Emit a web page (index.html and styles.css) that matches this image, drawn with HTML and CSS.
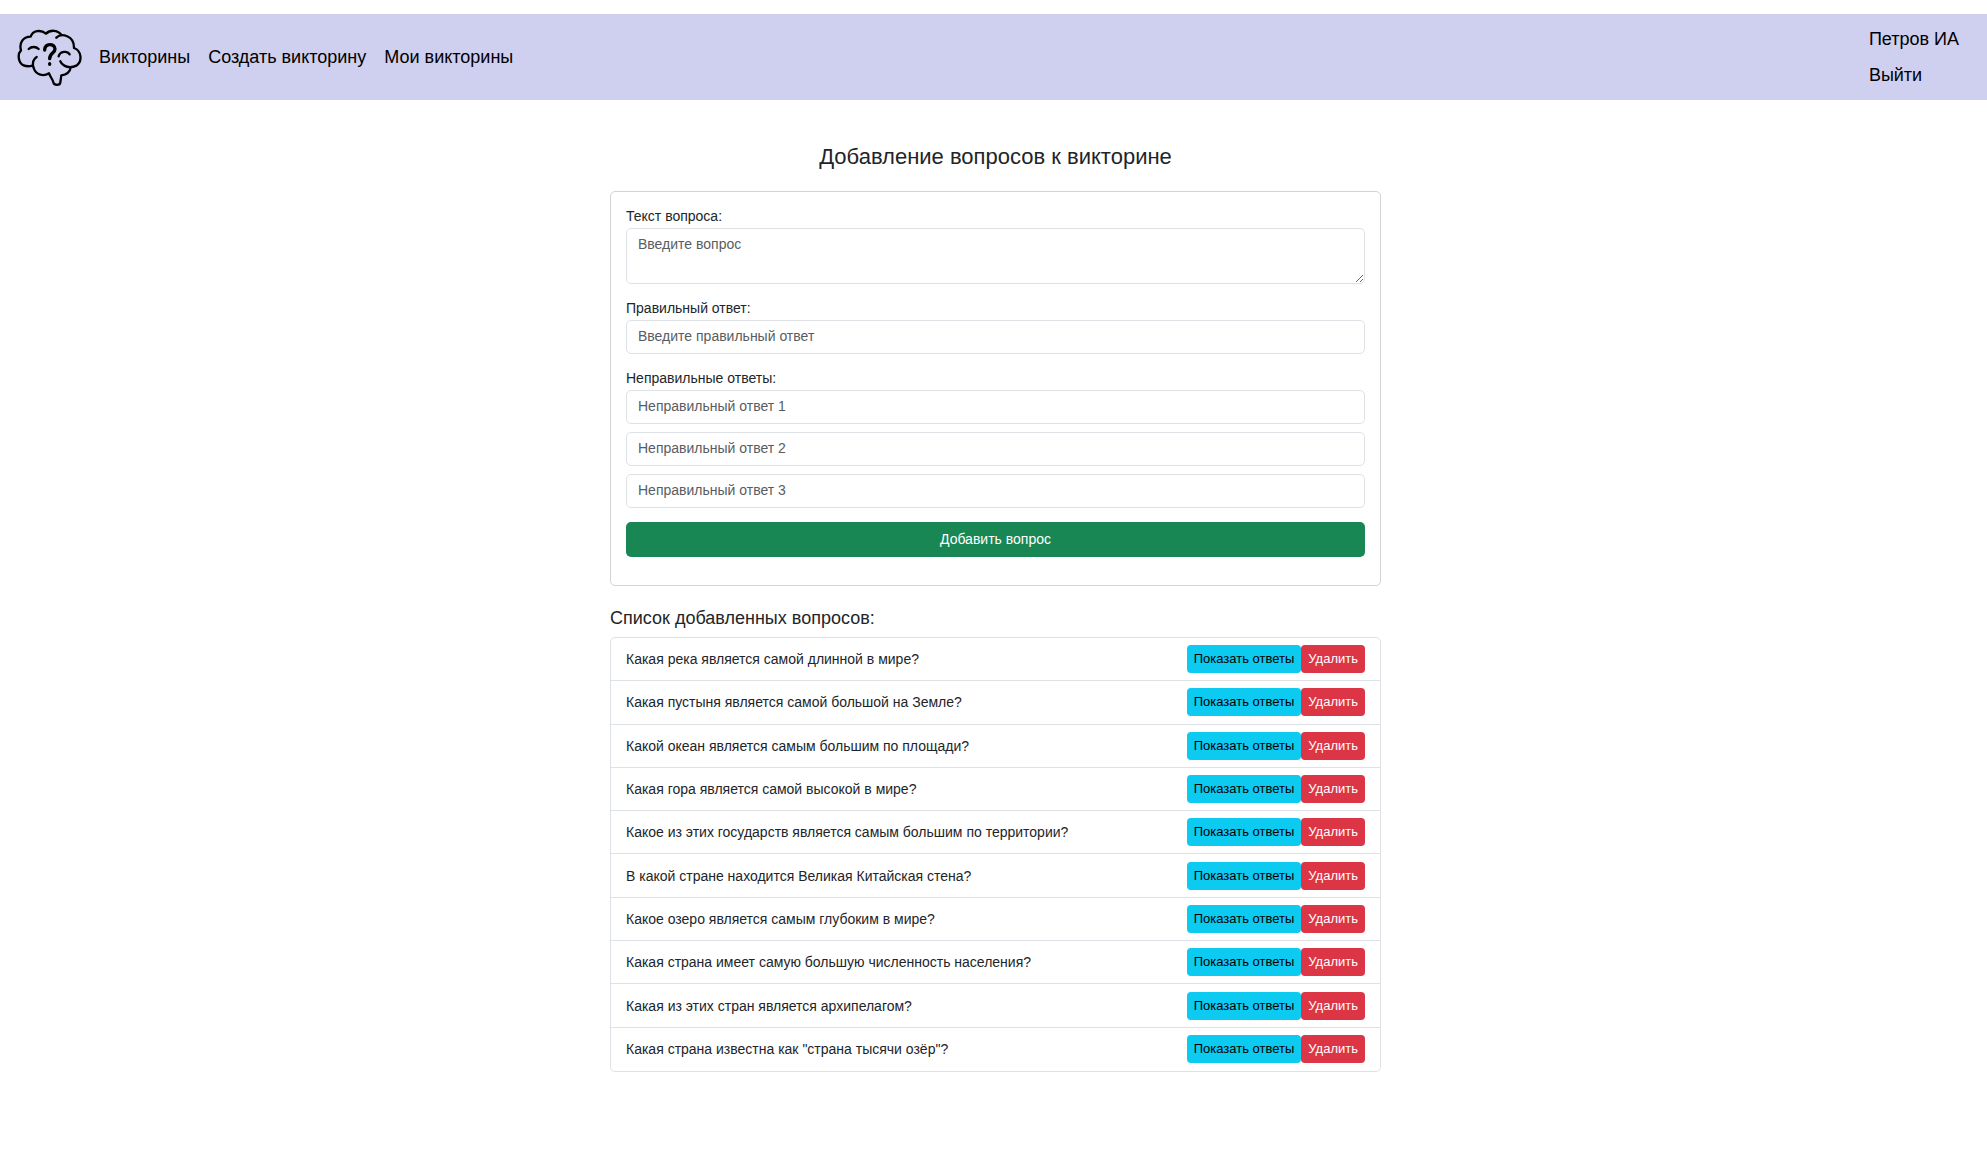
FILE: index.html
```html
<!DOCTYPE html>
<html lang="ru">
<head>
<meta charset="utf-8">
<meta name="viewport" content="width=device-width, initial-scale=1">
<title>Добавление вопросов к викторине</title>
<link rel="stylesheet" href="styles.css">
</head>
<body>
<header class="navbar">
  <a class="brand" href="#" aria-label="Главная">
    <svg class="logo" viewBox="51 84 195 177" aria-hidden="true">
      <path d="M169 113C184 98 223 106 222 144C246 152 247 186 229 197C211 206 189 201 181 184"/>
      <path d="M184 104C172 89 150 89 138 101C122 88 98 91 92 110C68 110 57 130 63 151C52 162 54 189 71 196C80 200 90 199 98 197"/>
      <path d="M110 171C98 179 96 190 101 204C108 226 131 230 147 220C151 231 158 238 160 247C163 257 180 257 181 247L184 226C200 224 210 216 212 203"/>
      <path d="M86 147C94 139 108 139 116 147M176 169C180 153 202 152 209 163"/>
      <path class="logo-mark" d="M134 150C133 129 165 129 165 147C165 160 149 159 149 176M149 191V193"/>
    </svg>
  </a>
  <nav class="menu">
    <a href="#">Викторины</a>
    <a href="#">Создать викторину</a>
    <a href="#">Мои викторины</a>
  </nav>
  <div class="account">
    <a href="#">Петров ИА</a>
    <a href="#">Выйти</a>
  </div>
</header>
<main class="page">
  <div class="content">
    <h1 class="title">Добавление вопросов к викторине</h1>
    <form class="card">
      <div class="field">
        <label for="question">Текст вопроса:</label>
        <textarea class="control" id="question" rows="2" placeholder="Введите вопрос"></textarea>
      </div>
      <div class="field">
        <label for="correct">Правильный ответ:</label>
        <input class="control" id="correct" type="text" placeholder="Введите правильный ответ">
      </div>
      <div class="field">
        <label for="wrong1">Неправильные ответы:</label>
        <div class="answers">
          <input class="control" id="wrong1" type="text" placeholder="Неправильный ответ 1">
          <input class="control" type="text" aria-label="Неправильный ответ 2" placeholder="Неправильный ответ 2">
          <input class="control" type="text" aria-label="Неправильный ответ 3" placeholder="Неправильный ответ 3">
        </div>
      </div>
      <button class="submit" type="submit">Добавить вопрос</button>
    </form>
    <h2 class="subtitle">Список добавленных вопросов:</h2>
    <ul class="questions">
      <li><span>Какая река является самой длинной в мире?</span><div class="actions"><button class="show" type="button">Показать ответы</button><button class="delete" type="button">Удалить</button></div></li>
      <li><span>Какая пустыня является самой большой на Земле?</span><div class="actions"><button class="show" type="button">Показать ответы</button><button class="delete" type="button">Удалить</button></div></li>
      <li><span>Какой океан является самым большим по площади?</span><div class="actions"><button class="show" type="button">Показать ответы</button><button class="delete" type="button">Удалить</button></div></li>
      <li><span>Какая гора является самой высокой в мире?</span><div class="actions"><button class="show" type="button">Показать ответы</button><button class="delete" type="button">Удалить</button></div></li>
      <li><span>Какое из этих государств является самым большим по территории?</span><div class="actions"><button class="show" type="button">Показать ответы</button><button class="delete" type="button">Удалить</button></div></li>
      <li><span>В какой стране находится Великая Китайская стена?</span><div class="actions"><button class="show" type="button">Показать ответы</button><button class="delete" type="button">Удалить</button></div></li>
      <li><span>Какое озеро является самым глубоким в мире?</span><div class="actions"><button class="show" type="button">Показать ответы</button><button class="delete" type="button">Удалить</button></div></li>
      <li><span>Какая страна имеет самую большую численность населения?</span><div class="actions"><button class="show" type="button">Показать ответы</button><button class="delete" type="button">Удалить</button></div></li>
      <li><span>Какая из этих стран является архипелагом?</span><div class="actions"><button class="show" type="button">Показать ответы</button><button class="delete" type="button">Удалить</button></div></li>
      <li><span>Какая страна известна как "страна тысячи озёр"?</span><div class="actions"><button class="show" type="button">Показать ответы</button><button class="delete" type="button">Удалить</button></div></li>
    </ul>
  </div>
</main>
</body>
</html>
```
FILE: styles.css
```css
*, *::before, *::after {
  box-sizing: border-box;
}

body {
  margin: 0;
  padding-top: 14px;
  background: #fff;
  color: #212529;
  font: 14px/22px Arial, "Liberation Sans", sans-serif;
}

button, input, textarea {
  font: inherit;
}

a {
  color: #000;
  text-decoration: none;
}

.navbar {
  display: flex;
  align-items: center;
  padding: 7px 28px 7px 17px;
  background: #cfcfef;
  font-size: 18px;
}

.brand {
  display: flex;
  margin-right: 17px;
}

.logo {
  width: 65px;
  height: 59px;
  fill: none;
  stroke: #000;
  stroke-width: 7;
  stroke-linecap: round;
  stroke-linejoin: round;
}

.logo-mark {
  stroke-width: 10;
}

.menu {
  display: flex;
  gap: 18px;
}

.account {
  display: flex;
  flex-direction: column;
  margin-left: auto;
  line-height: 36px;
}

.page {
  padding: 43px 0 42px 4px;
}

.content {
  max-width: 771px;
  margin: 0 auto;
}

.title {
  margin: 0 0 20px;
  font-size: 22px;
  font-weight: 400;
  line-height: 28px;
  text-align: center;
}

.card {
  padding: 14px 15px 28px;
  border: 1px solid #d3d3d3;
  border-radius: 5px;
}

.field {
  margin-bottom: 14px;
}

.field label {
  display: block;
  padding-bottom: 2px;
  line-height: 20px;
}

.control {
  display: block;
  width: 100%;
  height: 34px;
  padding: 5px 11px 7px;
  border: 1px solid #dee2e6;
  border-radius: 5px;
  background: #fff;
  color: #212529;
  line-height: 20px;
}

textarea.control {
  height: 56px;
  resize: vertical;
}

.control::placeholder {
  color: #595c5f;
  opacity: 1;
}

.answers {
  display: grid;
  gap: 8px;
}

.submit {
  display: block;
  width: 100%;
  height: 35px;
  padding: 0 11px 2px;
  border: 0;
  border-radius: 5px;
  background: #198754;
  color: #fff;
}

.subtitle {
  margin: 21px 0 8px;
  font-size: 18px;
  font-weight: 400;
  line-height: 22px;
}

.questions {
  display: grid;
  grid-auto-rows: 1fr;
  min-height: 435px;
  margin: 0;
  padding: 0;
  border: 1px solid #dee2e6;
  border-radius: 5px;
  list-style: none;
}

.questions li {
  display: flex;
  align-items: center;
  justify-content: space-between;
  padding: 0 15px;
}

.questions li:not(:last-child) {
  border-bottom: 1px solid #dee2e6;
}

.actions {
  display: flex;
}

.actions button {
  height: 28px;
  padding: 0 7px;
  border: 0;
  border-radius: 4px;
  font-size: 13px;
}

.show {
  background: #0dcaf0;
  color: #000;
}

.delete {
  background: #dc3545;
  color: #fff;
}
```
